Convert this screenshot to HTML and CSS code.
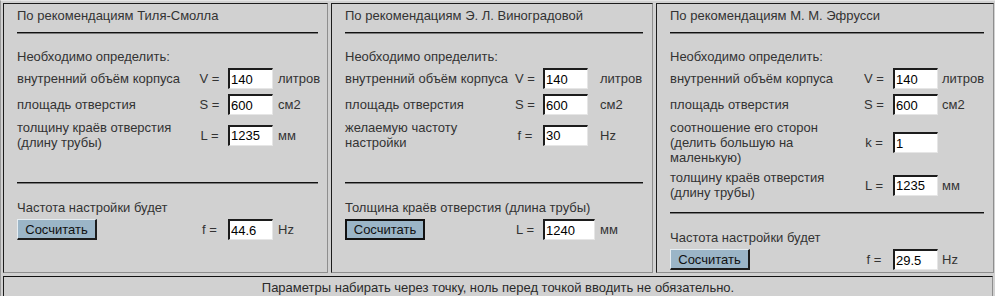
FILE: index.html
```html
<!DOCTYPE html>
<html>
<head>
  <meta charset="utf-8">
  <title>Расчёт фазоинвертора</title>
  <link rel="stylesheet" href="styles.css">
</head>
<body>
  <div class="frame">
    <div class="panels">

      <div class="panel panel-short panel-tile">
        <div class="panel-title">По рекомендациям Тиля-Смолла</div>
        <div class="rule"></div>
        <div class="lead">Необходимо определить:</div>
        <div class="form">
          <div class="label">внутренний объём корпуса</div>
          <div class="eq">V =</div>
          <input class="field" value="140">
          <div class="unit">литров</div>

          <div class="label">площадь отверстия</div>
          <div class="eq">S =</div>
          <input class="field" value="600">
          <div class="unit">см2</div>

          <div class="label">толщину краёв отверстия<br>(длину трубы)</div>
          <div class="eq">L =</div>
          <input class="field" value="1235">
          <div class="unit">мм</div>
        </div>
        <div class="rule rule-bottom"></div>
        <div class="lead lead-result">Частота настройки будет</div>
        <div class="form">
          <div class="label"><button class="btn">Сосчитать</button></div>
          <div class="eq">f =</div>
          <input class="field" value="44.6">
          <div class="unit">Hz</div>
        </div>
      </div>

      <div class="panel panel-short panel-vino">
        <div class="panel-title">По рекомендациям Э. Л. Виноградовой</div>
        <div class="rule"></div>
        <div class="lead">Необходимо определить:</div>
        <div class="form">
          <div class="label">внутренний объём корпуса</div>
          <div class="eq">V =</div>
          <input class="field" value="140">
          <div class="unit">литров</div>

          <div class="label">площадь отверстия</div>
          <div class="eq">S =</div>
          <input class="field" value="600">
          <div class="unit">см2</div>

          <div class="label">желаемую частоту<br>настройки</div>
          <div class="eq">f =</div>
          <input class="field" value="30">
          <div class="unit">Hz</div>
        </div>
        <div class="rule rule-bottom"></div>
        <div class="lead lead-result">Толщина краёв отверстия (длина трубы)</div>
        <div class="form">
          <div class="label"><button class="btn btn-default">Сосчитать</button></div>
          <div class="eq">L =</div>
          <input class="field field-wide" value="1240">
          <div class="unit">мм</div>
        </div>
      </div>

      <div class="panel panel-efrussi">
        <div class="panel-title">По рекомендациям М. М. Эфрусси</div>
        <div class="rule"></div>
        <div class="lead">Необходимо определить:</div>
        <div class="form">
          <div class="label">внутренний объём корпуса</div>
          <div class="eq">V =</div>
          <input class="field" value="140">
          <div class="unit">литров</div>

          <div class="label">площадь отверстия</div>
          <div class="eq">S =</div>
          <input class="field" value="600">
          <div class="unit">см2</div>

          <div class="label">соотношение его сторон<br>(делить большую на<br>маленькую)</div>
          <div class="eq">k =</div>
          <input class="field" value="1">
          <div class="unit"></div>

          <div class="label">толщину краёв отверстия<br>(длину трубы)</div>
          <div class="eq">L =</div>
          <input class="field" value="1235">
          <div class="unit">мм</div>
        </div>
        <div class="rule rule-bottom"></div>
        <div class="lead lead-result">Частота настройки будет</div>
        <div class="form">
          <div class="label"><button class="btn">Сосчитать</button></div>
          <div class="eq">f =</div>
          <input class="field" value="29.5">
          <div class="unit">Hz</div>
        </div>
      </div>

    </div>

    <div class="footer">Параметры набирать через точку, ноль перед точкой вводить не обязательно.</div>
  </div>
</body>
</html>
```

FILE: styles.css
```css
:root {
  --bg: #d1d1d1;
  --text: #333333;
  --dark: #1c1c1c;
  --edge: #8e8e8e;
  --button: #9bb5c7;
}

* {
  margin: 0;
  padding: 0;
  box-sizing: border-box;
}

body {
  background: var(--bg);
  color: var(--text);
  font-family: "Liberation Sans", Arial, sans-serif;
  font-size: 13px;
  line-height: 15px;
  overflow: hidden;
}

.frame {
  border-left: 1px solid #9a9a9a;
  border-top: 1px solid #e4e4e4;
  padding: 2px 0 0 2px;
  width: 1000px;
}

.panels {
  display: flex;
  gap: 3px;
}

/* inset cell, dark on top-left */
.panel {
  border-style: solid;
  border-width: 1px;
  border-color: var(--dark) var(--edge) var(--edge) var(--dark);
  padding: 4px 9px 2px 13px;
}

.panel-tile { width: 325px; }
.panel-vino { width: 322px; }
.panel-efrussi { width: 338px; }

.panel-title {
  white-space: nowrap;
}

.rule {
  margin-top: 9px;
  border-top: 1px solid #111;
  border-bottom: 1px solid #7a7a7a;
}

.rule-bottom {
  margin-top: 12px;
}

.panel-short .rule-bottom {
  margin-top: 32px;
}

.lead {
  margin-top: 15px;
  white-space: nowrap;
}

.lead-result {
  margin-top: 16px;
}

.form {
  display: grid;
  row-gap: 5px;
  align-items: center;
  margin-top: 4px;
}

.panel-tile .form {
  grid-template-columns: 174px 37px 45px 1fr;
}

.panel-vino .form {
  grid-template-columns: 162px 36px 45px 1fr;
}

.panel-efrussi .form {
  grid-template-columns: 185px 38px 45px 1fr;
}

.label {
  white-space: nowrap;
}

.eq {
  text-align: center;
  white-space: nowrap;
}

.unit {
  padding-left: 5px;
  white-space: nowrap;
}

.panel-vino .unit {
  padding-left: 12px;
}

.panel-efrussi .unit {
  padding-left: 4px;
}

.field {
  width: 45px;
  height: 21px;
  border-style: solid;
  border-width: 2px 1px 1px 2px;
  border-color: var(--dark) #e6e6e6 #e6e6e6 var(--dark);
  background: #fff;
  color: #000;
  font-family: "Liberation Sans", Arial, sans-serif;
  font-size: 13px;
  padding: 0 1px;
  outline: none;
}

.field-wide {
  width: 52px;
}

.btn {
  display: block;
  width: 80px;
  height: 21px;
  background: var(--button);
  color: #111;
  font-family: "Liberation Sans", Arial, sans-serif;
  font-size: 13px;
  border-style: solid;
  border-width: 1px 2px 2px 1px;
  border-color: #e6edf2 var(--dark) var(--dark) #e6edf2;
  padding: 0;
}

.btn-default {
  border: 2px solid #111;
}

.footer {
  margin-top: 3px;
  width: 990px;
  height: 24px;
  border-style: solid;
  border-width: 1px;
  border-color: #111 var(--edge) var(--edge) var(--dark);
  padding-top: 3px;
  text-align: center;
  color: #2a2a2a;
}
```
